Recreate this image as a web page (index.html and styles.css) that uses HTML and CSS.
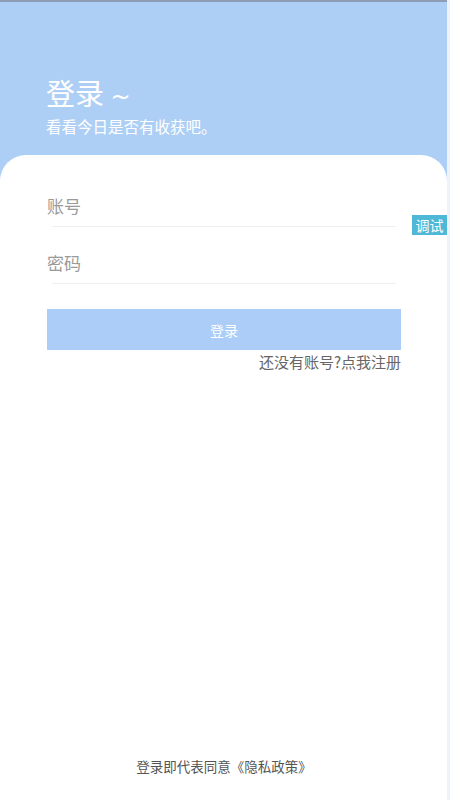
FILE: index.html
```html
<!DOCTYPE html>
<html lang="zh-CN">
<head>
    <meta charset="UTF-8">
    <meta name="viewport" content="width=device-width, initial-scale=1.0">
    <title>登录</title>
    <link rel="stylesheet" href="styles.css">
</head>
<body>
    <div class="app">
        <div class="hero">
            <h1 class="hero-title">登录 <span class="tilde">~</span></h1>
            <p class="hero-sub">看看今日是否有收获吧。</p>
        </div>

        <div class="card">
            <div class="field">
                <span class="field-label">账号</span>
            </div>
            <div class="field">
                <span class="field-label">密码</span>
            </div>

            <button class="login-btn">登录</button>
            <p class="register-link">还没有账号?点我注册</p>

            <p class="agreement">登录即代表同意《隐私政策》</p>
        </div>

        <div class="debug-badge">调试</div>
    </div>
</body>
</html>
```

FILE: styles.css
```css
html, body {
    margin: 0;
    padding: 0;
    height: 100%;
}

body {
    font-family: "Noto Sans CJK SC", "Noto Sans", sans-serif;
    background-color: #eef3f9;
}

.app {
    position: relative;
    width: 447px;
    height: 798px;
    border-top: 2px solid #8e9db3;
    background-color: #aecff5;
    display: flex;
    flex-direction: column;
}

.hero {
    padding: 73px 0 0 46px;
    height: 80px;
    color: #ffffff;
}

.hero-title {
    margin: 0;
    font-size: 29px;
    line-height: 34px;
    font-weight: normal;
}

.tilde {
    font-family: "DejaVu Sans", sans-serif;
    font-size: 24px;
}

.hero-sub {
    margin: 2px 0 0;
    font-size: 15.5px;
    line-height: 20px;
}

.card {
    flex: 1;
    background-color: #ffffff;
    border-radius: 26px 26px 0 0;
    padding: 15px 46px 0 47px;
    display: flex;
    flex-direction: column;
}

.field {
    margin: 0 5px;
    padding: 24px 0 8px;
    border-bottom: 1px solid #eeeeee;
}

.field-label {
    display: block;
    margin-left: -5px;
    font-size: 17px;
    line-height: 24px;
    color: #9a9a9a;
}

.login-btn {
    margin-top: 25px;
    height: 41px;
    border: none;
    background-color: #abcdf8;
    color: #ffffff;
    font-family: inherit;
    font-size: 14px;
}

.register-link {
    margin: 2px 0 0;
    text-align: right;
    font-size: 15px;
    line-height: 20px;
    color: #666666;
}

.agreement {
    margin: auto 0 25px;
    text-align: center;
    font-size: 13.5px;
    line-height: 18px;
    color: #555555;
}

.debug-badge {
    position: absolute;
    top: 213px;
    right: 0;
    width: 35px;
    height: 20px;
    line-height: 20px;
    text-align: center;
    background-color: #4fb8d6;
    color: #ffffff;
    font-size: 14px;
}
```
